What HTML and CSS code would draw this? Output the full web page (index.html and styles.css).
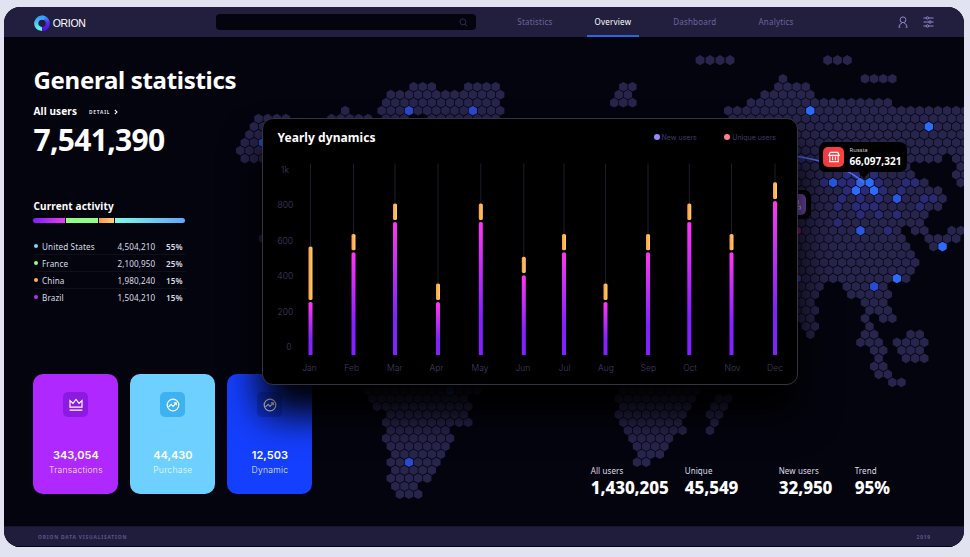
FILE: index.html
```html
<!DOCTYPE html>
<html lang="en">
<head>
<meta charset="utf-8">
<title>Orion</title>
<link rel="stylesheet" href="styles.css">
</head>
<body>
<div class="frame">
  <header class="topbar">
    <div class="brand">
      <svg class="brand-mark" viewBox="0 0 16 17">
        <defs>
          <linearGradient id="lg1" x1="0" y1="0" x2="0" y2="1"><stop offset="0" stop-color="#3aa0f5"/><stop offset="1" stop-color="#62f0f5"/></linearGradient>
          <linearGradient id="lg2" x1="0" y1="0" x2="0" y2="1"><stop offset="0" stop-color="#3a8cf5"/><stop offset=".45" stop-color="#4a30f0"/><stop offset="1" stop-color="#5a10e8"/></linearGradient>
        </defs>
        <path d="M8 2.6A5.7 5.7 0 0 1 8.3 14" fill="none" stroke="url(#lg2)" stroke-width="4.2"/>
        <path d="M10.5 3.2A5.7 5.7 0 1 0 8 14" fill="none" stroke="url(#lg1)" stroke-width="4.2"/>
      </svg>
      <span class="brand-name">ORION</span>
    </div>
    <div class="search">
      <svg viewBox="0 0 10 10"><circle cx="4.3" cy="4.3" r="3.3"/><path d="M6.8 6.8L9 9"/></svg>
    </div>
    <nav class="nav">
      <a class="nav-item">Statistics</a>
      <a class="nav-item active">Overview</a>
      <a class="nav-item">Dashboard</a>
      <a class="nav-item">Analytics</a>
    </nav>
    <div class="tools">
      <svg viewBox="0 0 10 12"><circle cx="5" cy="3.8" r="2.9"/><path d="M1.2 11.3V10.2A2.6 2.6 0 0 1 3 7.7L4 6.8M8.8 11.3V10.2A2.6 2.6 0 0 0 7 7.7L6 6.8M.7 11.2H2.4M7.6 11.2H9.3"/></svg>
      <svg class="sliders" viewBox="0 0 11 12"><path d="M.5 2H3.2M5.6 2H10.5M.5 6H5.8M8.2 6H10.5M.5 10H3.2M5.6 10H10.5"/><circle cx="4.4" cy="2" r="1.2"/><circle cx="7" cy="6" r="1.2"/><circle cx="4.4" cy="10" r="1.2"/></svg>
    </div>
  </header>

  <main class="main">
    <svg class="map" id="map" viewBox="4 37 960 489"></svg>

    <div class="tip tip-cut"><span class="tip-icon violet"><svg viewBox="0 0 12 12"><path d="M7 1.8H8.5V4.6H6.5M6 7.4H10.5V10H8M6 10H7"/></svg></span></div>
    <div class="tip tip-main">
      <span class="tip-icon red"><svg viewBox="0 0 12 12"><path d="M2.2 1.4H9.8L11.2 4.4H.8ZM1.8 4.6V10.4M4.6 5.4V9.2M7.4 5.4V9.2M10.2 4.6V10.4M1 10.6H11"/></svg></span>
      <span class="tip-text"><span class="tip-label">Russia</span><b class="tip-value">66,097,321</b></span>
    </div>

    <section class="summary">
      <h1>General statistics</h1>
      <div class="sub"><h2>All users</h2><span class="detail">DETAIL</span><svg class="chev" viewBox="0 0 4 6"><path d="M.8 .8L3 3L.8 5.2"/></svg></div>
      <div class="total">7,541,390</div>
      <h3>Current activity</h3>
      <div class="split"><i class="s1"></i><i class="s2"></i><i class="s3"></i><i class="s4"></i></div>
      <ul class="countries">
        <li><i class="dot c1"></i><span>United States</span><em>4,504,210</em><b>55%</b></li>
        <li><i class="dot c2"></i><span>France</span><em>2,100,950</em><b>25%</b></li>
        <li><i class="dot c3"></i><span>China</span><em>1,980,240</em><b>15%</b></li>
        <li><i class="dot c4"></i><span>Brazil</span><em>1,504,210</em><b>15%</b></li>
      </ul>
    </section>

    <div class="bottom">
      <div class="tiles">
        <div class="tile purple">
          <span class="tile-icon"><svg viewBox="0 0 14 14"><path d="M1 2.6L4 5.3L7 1.5L10 5.3L13 2.6V9.2H1Z M.6 12.2H13.4"/></svg></span>
          <b>343,054</b><span>Transactions</span>
        </div>
        <div class="tile sky">
          <span class="tile-icon"><svg viewBox="0 0 14 14"><circle cx="7" cy="7" r="5.8"/><path d="M2.5 8.9L5.2 6.4L7 8.4L10.2 5.2M7.8 4.8H10.4V7.3"/></svg></span>
          <b>44,430</b><span>Purchase</span>
        </div>
        <div class="tile blue">
          <span class="tile-icon"><svg viewBox="0 0 14 14"><circle cx="7" cy="7" r="5.8"/><path d="M2.5 8.9L5.2 6.4L7 8.4L10.2 5.2M7.8 4.8H10.4V7.3"/></svg></span>
          <b>12,503</b><span>Dynamic</span>
        </div>
      </div>
      <div class="figures">
        <div class="fig f1"><span>All users</span><b>1,430,205</b></div>
        <div class="fig f2"><span>Unique</span><b>45,549</b></div>
        <div class="fig f3"><span>New users</span><b>32,950</b></div>
        <div class="fig f4"><span>Trend</span><b>95%</b></div>
      </div>
    </div>

    <section class="panel">
      <div class="panel-head">
        <h2>Yearly dynamics</h2>
        <div class="legend"><span><i class="k1"></i>New users</span><span><i class="k2"></i>Unique users</span></div>
      </div>
      <svg class="chart" id="chart" viewBox="263 155 534 229"></svg>
    </section>
  </main>

  <footer class="foot"><span>ORION DATA VISUALISATION</span><span>2019</span></footer>
</div>
<script src="app.js"></script>
</body>
</html>
```
FILE: styles.css
```css
* { box-sizing: border-box; }
body { margin: 0; background: #e1e4f0; width: 970px; height: 557px; overflow: hidden; padding: 7px 6px 0 4px; font-family: "Noto Sans", sans-serif; color: #fff; }
h1, h2, h3, ul { margin: 0; padding: 0; }
.frame { width: 960px; height: 540px; border-radius: 16px; overflow: hidden; background: #04040f; display: flex; flex-direction: column; }
.topbar { height: 30px; flex: none; background: #211e3e; display: flex; align-items: center; padding-left: 29.7px; }
.brand { display: flex; align-items: center; width: 182px; padding-top: 2px; }
.brand-mark { width: 16px; height: 17px; margin-right: 3px; }
.brand-name { font: 10.5px/15px "Liberation Sans", sans-serif; letter-spacing: -.3px; }
.search { width: 260px; height: 16px; border-radius: 4px; background: #03040e; display: flex; align-items: center; justify-content: flex-end; padding-right: 8px; margin-right: 33.6px; }
.search svg { width: 9px; height: 9px; fill: none; stroke: #34305c; stroke-width: 1; }
.nav { display: flex; gap: 26px; height: 30px; width: 365px; }
.nav-item { padding: 0 8px; font-size: 8px; line-height: 30px; letter-spacing: .21px; color: #6b659f; white-space: nowrap; }
.nav-item.active { color: #fff; box-shadow: inset 0 -2px #2c66dc; }
.tools { display: flex; gap: 15px; margin-left: 24px; }
.tools svg { width: 10px; height: 12px; fill: none; stroke: #8f87c4; stroke-width: 1; }
.tools .sliders { width: 11px; }

.main { position: relative; flex: 1; display: flex; flex-direction: column; }
.map { position: absolute; left: 0; top: 0; width: 960px; height: 489px; }
.summary { position: relative; padding-left: 29.5px; width: 260px; }
h1 { font-size: 24px; line-height: 33px; margin-top: 26px; letter-spacing: -.3px; white-space: nowrap; }
.sub { display: flex; align-items: center; height: 16px; margin-top: 7px; }
.sub h2 { font-size: 10px; line-height: 16px; letter-spacing: .12px; margin-top: -1px; }
.detail { font-size: 4.8px; font-weight: 700; letter-spacing: .8px; margin: 2px 4px 0 12px; color: #dcdce8; }
.chev { width: 4px; height: 6px; margin-top: 2px; fill: none; stroke: #fff; stroke-width: 1.1; }
.total { font-size: 30px; line-height: 40px; font-weight: 700; letter-spacing: -.7px; margin-top: 1px; }
h3 { font-size: 10px; line-height: 14px; margin-top: 39px; letter-spacing: .12px; }
.split { display: flex; gap: 1px; width: 152px; height: 5px; margin: 5px 0 0 -.3px; border-radius: 3px; overflow: hidden; }
.s1 { width: 32px; background: linear-gradient(90deg, #7c1eff, #f23af0); }
.s2 { width: 32px; background: #90ff83; }
.s3 { width: 15px; background: linear-gradient(90deg, #ff9a4a, #ffd070); }
.s4 { flex: 1; background: linear-gradient(90deg, #7dfbe9, #5fa8ff); }
.countries { list-style: none; width: 152px; margin-top: 15px; }
.countries li { display: flex; align-items: center; height: 17px; font-size: 8.1px; color: #dcdce6; border-bottom: 1px solid #0f0f1b; }
.countries li:last-child { border: 0; padding-bottom: 1px; }
.countries span { flex: 1; letter-spacing: .14px; }
.countries em { font-style: normal; width: 44.5px; letter-spacing: .1px; }
.countries b { width: 19.5px; margin-left: 4px; font-weight: 600; letter-spacing: .1px; }
.dot { width: 4px; height: 4px; border-radius: 50%; margin-right: 4.5px; }
.c1 { background: #7dd3fb; } .c2 { background: #90ff83; } .c3 { background: #ffb055; } .c4 { background: #b131f7; }

.bottom { position: relative; margin-top: auto; height: 152px; display: flex; padding-left: 29.4px; }
.tiles { display: flex; gap: 12px; width: 557.3px; }
.tile { width: 85px; height: 120px; border-radius: 10px; display: flex; flex-direction: column; align-items: center; padding-top: 18px; font-family: Inter, sans-serif; }
.tile-icon { width: 25px; height: 25px; border-radius: 5px; display: flex; align-items: center; justify-content: center; }
.tile-icon svg { width: 14px; height: 14px; fill: none; stroke: #fff; stroke-width: 1.2; }
.tile b { font-size: 11px; line-height: 15px; font-weight: 600; margin-top: 31px; }
.tile > span:last-child { font-size: 8.6px; line-height: 13px; font-weight: 300; margin-top: 1px; letter-spacing: .25px; color: rgba(255,255,255,.9); }
.purple { background: #ae28ff; } .purple .tile-icon { background: #8d1ae0; }
.sky { background: #6dd0ff; } .sky .tile-icon { background: #3cb2f3; }
.blue { background: #153fff; } .blue .tile-icon { background: #1033d8; }
.figures { display: flex; padding-top: 90px; }
.fig span { display: block; font-size: 8px; line-height: 13px; color: #dcdce6; letter-spacing: .1px; }
.fig b { display: block; font-size: 17px; line-height: 22px; font-weight: 800; letter-spacing: -.08px; }
.f1 { width: 94px; } .f2 { width: 94px; } .f3 { width: 76px; }

.panel { position: absolute; left: 258px; top: 81px; width: 536px; height: 267px; background: #000; border: 1px solid #34333f; border-radius: 11px; box-shadow: 0 28px 38px 2px #000; }
.panel-head { height: 36px; display: flex; justify-content: space-between; align-items: center; padding: 0 21px 0 14.5px; }
.panel-head h2 { font-size: 12px; line-height: 20px; letter-spacing: .06px; margin-top: 2px; }
.legend { display: flex; gap: 27.5px; font: 7px "Inter", sans-serif; color: #413b6e; }
.legend span { display: flex; align-items: center; }
.legend i { width: 6px; height: 6px; border-radius: 50%; margin-right: 2px; }
.k1 { background: #9c86ff; } .k2 { background: #ff7f95; }
.chart { display: block; width: 534px; height: 229px; }
.chart text { font: 300 8.5px Inter, sans-serif; fill: #423d64; text-anchor: middle; }

.tip { position: absolute; background: #000; border-radius: 7px; display: flex; align-items: center; }
.tip-main { left: 815px; top: 105px; width: 88px; height: 30px; padding-left: 4.3px; }
.tip-main::after { content: ""; position: absolute; left: 39px; top: 29px; border: 6px solid transparent; border-top: 8px solid #000; border-bottom: 0; }
.tip-cut { left: 768px; top: 153px; width: 39px; height: 29px; justify-content: flex-end; padding-right: 5px; }
.tip-icon { width: 20.5px; height: 20.5px; border-radius: 5px; display: flex; align-items: center; justify-content: center; }
.tip-icon svg { width: 12px; height: 12px; fill: none; stroke: #fff; stroke-width: 1.1; }
.red { background: linear-gradient(135deg, #ff3b4f, #fa4639); } .violet { background: #7d52c0; }
.violet svg { stroke: #c9b6e8; }
.tip-text { margin-left: 5.7px; }
.tip-label { display: block; font-size: 5.9px; line-height: 8px; letter-spacing: .08px; color: #d0d0dc; }
.tip-value { display: block; font-size: 10px; line-height: 15px; letter-spacing: .07px; }

.foot { height: 21px; flex: none; background: #201d3c; border-top: 1px solid #171529; border-bottom: 1px solid #05040f; display: flex; justify-content: space-between; align-items: center; padding: 0 33px 0 34px; font-size: 4.9px; font-weight: 700; letter-spacing: .82px; color: #5c568e; }
```
FILE: app.js
```js
const NS = 'http://www.w3.org/2000/svg';
function add(parent, tag, attrs, text) {
  const el = document.createElementNS(NS, tag);
  for (const k in attrs) el.setAttribute(k, attrs[k]);
  if (text) el.textContent = text;
  parent.appendChild(el);
  return el;
}

const map = document.getElementById('map');
const PX = 9.12, PY = 7.99, OX = 409, OY = 110.7;
function hex(x, y, fill, r = 4.85) {
  const w = r * 0.866;
  const p = [[0, -r], [w, -r / 2], [w, r / 2], [0, r], [-w, r / 2], [-w, -r / 2]];
  add(map, 'polygon', { points: p.map(q => (x + q[0]).toFixed(2) + ',' + (y + q[1]).toFixed(2)).join(' '), fill });
}
// land: row -> [first x, last x] runs
const land = {
  '-4': [[783, 783], [865, 892]],
  '-3': [[413, 432], [468, 496], [623, 632], [778, 806]],
  '-2': [[391, 500], [619, 628], [765, 810]],
  '-1': [[386, 495], [614, 632], [751, 888]],
  0: [[345, 345], [382, 500], [728, 965]],
  1: [[259, 286], [331, 368], [386, 404], [432, 495], [732, 965]],
  2: [[254, 263], [790, 965]], 3: [[249, 258], [790, 965]], 4: [[245, 263], [790, 965]],
  5: [[240, 258], [790, 965]], 6: [[245, 263], [790, 938], [956, 965]],
  7: [[790, 907], [960, 960]], 8: [[790, 910], [956, 965]], 9: [[790, 924], [960, 960]],
  10: [[790, 938]], 11: [[790, 942]], 12: [[790, 938]], 13: [[790, 924]], 14: [[790, 920]],
  15: [[790, 897], [915, 924], [951, 960]],
  16: [[263, 263], [790, 901], [929, 956]],
  17: [[790, 906], [933, 942]], 18: [[790, 910]], 19: [[790, 915]], 20: [[790, 910]], 21: [[790, 906]],
  22: [[790, 819], [847, 883]], 23: [[790, 815], [851, 888]], 24: [[790, 810], [865, 883]],
  25: [[797, 815], [870, 888]], 26: [[801, 810], [865, 865], [883, 892]],
  27: [[806, 815], [870, 870]], 28: [[810, 810], [865, 874], [910, 919]],
  29: [[860, 879], [897, 924]], 30: [[874, 883], [901, 919]], 31: [[879, 879], [906, 924]],
  32: [[874, 883]], 33: [[879, 888]], 34: [[892, 901]],
  35: [[368, 477], [623, 695]], 36: [[373, 464], [619, 691], [719, 728]],
  37: [[377, 468], [623, 687], [714, 723]], 38: [[391, 464], [619, 682], [710, 719]],
  39: [[386, 468], [623, 678], [714, 714]], 40: [[391, 445], [628, 682], [710, 710]],
  41: [[386, 450], [632, 669]], 42: [[391, 445], [637, 664]], 43: [[395, 441], [641, 659]],
  44: [[391, 436], [637, 646]], 45: [[395, 432]], 46: [[391, 427]], 47: [[395, 413]], 48: [[400, 418]]
};
const B = '#2b6dfa', M = '#2a4bcb', D = '#2b2a74';
const marks = [
  [0, 409, M], [0, 473, M], [0, 810, B], [2, 929, B], [4, 263, M],
  [9, 833, '#2858e0'], [9, 860, '#3162e6'], [9, 869, B], [10, 856, B], [10, 874, B], [11, 897, '#2858e0'],
  [15, 860, '#2858e0'], [17, 942, B], [21, 897, B], [22, 874, M], [35, 450, M], [44, 409, M],
  [15, 796, '#a21890'], [21, 796, M], [6, 801, D],
  [9, 824, D], [9, 842, D], [9, 851, D], [9, 879, D], [9, 906, D], [9, 915, D],
  [8, 856, D], [8, 874, D], [8, 846, D], [10, 847, D], [10, 865, D], [10, 883, D], [10, 901, D],
  [11, 842, D], [11, 860, D], [11, 879, D], [11, 924, D], [11, 933, D],
  [12, 838, D], [12, 856, D], [12, 865, D], [12, 874, D], [12, 919, D],
  [13, 860, D], [13, 879, D], [13, 897, D], [14, 838, D], [15, 888, D]
];
const colIndex = (x, k) => Math.round((x - OX - (k % 2 ? PX / 2 : 0)) / PX);
const colored = {};
marks.forEach(m => { colored[m[0] + ':' + colIndex(m[1], m[0])] = m[2]; });
for (const key in land) {
  const k = +key;
  land[key].forEach(run => {
    for (let i = colIndex(run[0], k); i <= colIndex(run[1], k); i++)
      hex(OX + (k % 2 ? PX / 2 : 0) + i * PX, OY + k * PY, colored[k + ':' + i] || '#28254d');
  });
}
[700, 710, 720, 730, 827.7, 837.5, 847.3].forEach(x => hex(x, 60.2, '#28254d', 5.1));
add(map, 'path', { d: 'M790 155.5Q842 162 864 183', fill: 'none', stroke: '#4a70f0', 'stroke-width': 1.6 });

const chart = document.getElementById('chart');
const defs = add(chart, 'defs', {});
const g1 = add(defs, 'linearGradient', { id: 'mag', x1: 0, y1: 0, x2: 0, y2: 1 });
add(g1, 'stop', { offset: 0.05, 'stop-color': '#f936f3' });
add(g1, 'stop', { offset: 0.72, 'stop-color': '#8220ff' });
const g2 = add(defs, 'linearGradient', { id: 'org' });
add(g2, 'stop', { offset: 0, 'stop-color': '#ff9c48' });
add(g2, 'stop', { offset: 1, 'stop-color': '#ffd069' });
// month, bar x, label x, unique top, unique bottom, new top
const months = [
  ['Jan', 310.5, 309.5, 246.5, 300, 302], ['Feb', 353.5, 351.7, 234, 250.3, 252.2],
  ['Mar', 395, 394.7, 203.5, 220, 222], ['Apr', 438, 436.5, 283.5, 300, 302],
  ['May', 480.8, 480, 203.5, 220, 222], ['Jun', 523.8, 522.8, 256.8, 273, 275.3],
  ['Jul', 564, 564.5, 234, 250.3, 252.2], ['Aug', 605.5, 606, 283.5, 300, 302],
  ['Sep', 648, 648.3, 234, 250.3, 252.2], ['Oct', 689.3, 690, 203.5, 220, 222],
  ['Nov', 731.5, 732.5, 234, 250.3, 252.2], ['Dec', 775, 775, 182.3, 199, 201]
];
months.forEach(([name, x, lx, a, b, c]) => {
  add(chart, 'rect', { x: x - 0.5, y: 163.5, width: 1, height: a - 163.5, fill: '#1d1c28' });
  add(chart, 'rect', { x: x - 2, y: a, width: 4, height: b - a, rx: 1.6, fill: 'url(#org)' });
  add(chart, 'path', { d: `M${x - 2} 355V${c + 1.5}Q${x - 2} ${c} ${x} ${c}T${x + 2} ${c + 1.5}V355Z`, fill: 'url(#mag)' });
  add(chart, 'text', { x: lx, y: 371.3 }, name);
});
[['1k', 285, 172.8], ['800', 285.3, 208.3], ['600', 285.3, 243.8], ['400', 285.3, 279.3], ['200', 285.3, 314.8], ['0', 289, 350.3]]
  .forEach(t => add(chart, 'text', { x: t[1], y: t[2] }, t[0]));
```
